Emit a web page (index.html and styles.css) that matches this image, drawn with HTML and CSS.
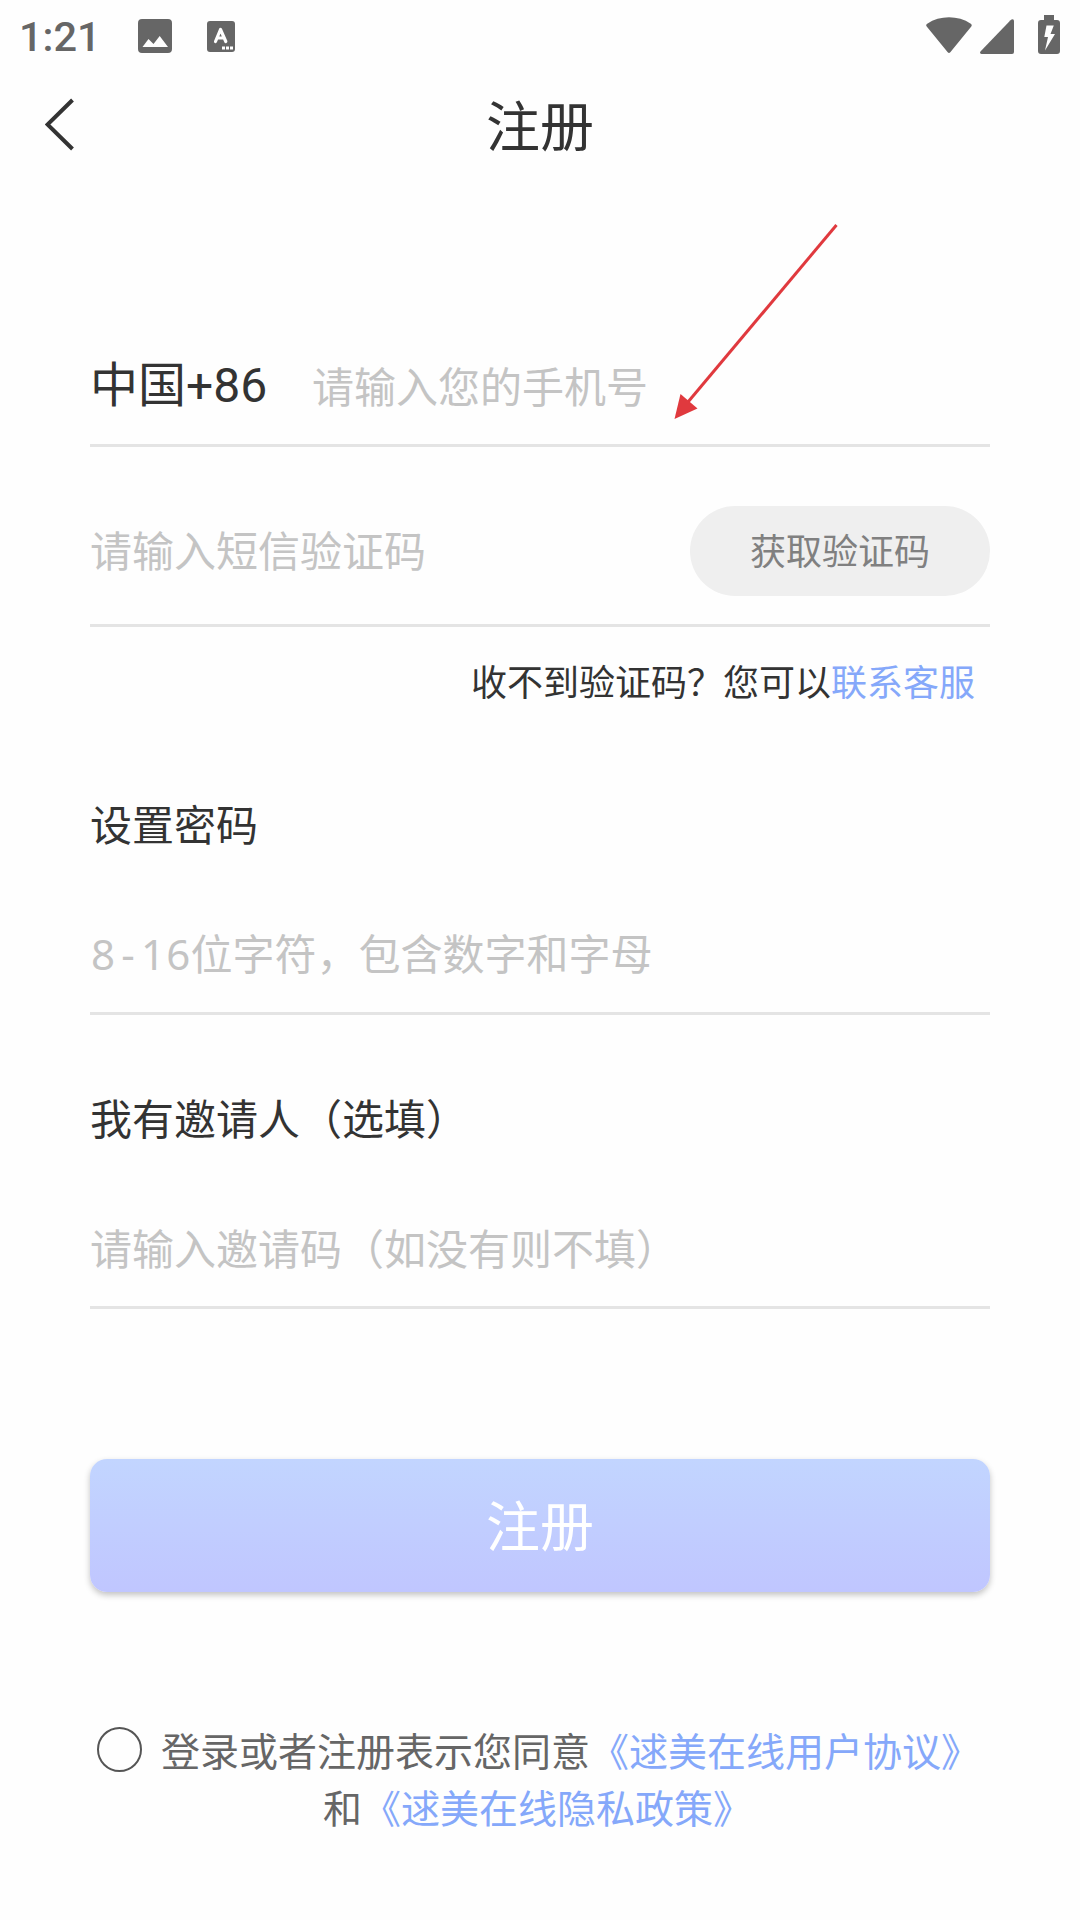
FILE: index.html
```html
<!DOCTYPE html>
<html lang="zh-CN">
<head>
    <meta charset="UTF-8">
    <title>注册</title>
    <meta name="viewport" content="width=device-width, initial-scale=1">
    <link rel="stylesheet" href="styles.css">
</head>
<body>
    <!-- 状态栏 -->
    <div class="status-bar">
        <span class="time">1:21</span>
        <svg class="icon-image" width="34" height="34" viewBox="0 0 34 34">
            <path fill="#666" fill-rule="evenodd" d="M4 0h26a4 4 0 0 1 4 4v26a4 4 0 0 1-4 4H4a4 4 0 0 1-4-4V4a4 4 0 0 1 4-4zM4.500 28H30L21.700 17L15.500 25L10.500 20z"/>
        </svg>
        <svg class="icon-input" width="28" height="31" viewBox="0 0 28 31">
            <rect width="28" height="31" rx="3" fill="#666"/>
            <path d="M8.500 20.500L13.500 8.500L18.800 20.500M10.500 17H16.500" fill="none" stroke="#fff" stroke-width="3.200" stroke-linecap="round" stroke-linejoin="round"/>
            <path d="M15 25.500h3v3h-3zM19 25.500h3v3h-3zM23 25.500h3v3h-3z" fill="#fff"/>
        </svg>
        <div class="status-right">
            <svg class="icon-wifi" width="46" height="37" viewBox="0 0 46 37">
                <path fill="#666" d="M.7 9.500Q-.6 8 1.200 6.700C14-1.800 32-1.800 44.800 6.700Q46.400 8 45.300 9.500L24.300 35.300Q23 36.800 21.700 35.300z"/>
            </svg>
            <svg class="icon-signal" width="34" height="35" viewBox="0 0 34 35">
                <path fill="#666" d="M34 2.500V33q0 2-2 2H1.500q-2.500-.5-.8-2.700L30.500 1.200Q33-.8 34 1.500z"/>
            </svg>
            <svg class="icon-battery" width="22" height="39" viewBox="0 0 22 39">
                <path fill="#666" fill-rule="evenodd" d="M6 0h10v5h3q3 0 3 3v28q0 3-3 3H3q-3 0-3-3V8q0-3 3-3h3zM8.500 10.500L6.300 22H10L7 35.500L17 19H12.500L15.800 10.500z"/>
            </svg>
        </div>
    </div>

    <div class="header">
        <svg class="back" width="30" height="54" viewBox="0 0 30 54">
            <path d="M27.500 2L2.500 26.500L27.500 51" fill="none" stroke="#333" stroke-width="4"/>
        </svg>
        <h1>注册</h1>
    </div>

    <div class="form">
        <div class="field field-phone">
            <span class="area">中国<span class="latin">+86</span></span>
            <span class="hint">请输入您的手机号</span>
        </div>
        <div class="field field-code">
            <span class="hint">请输入短信验证码</span>
            <button class="btn-code">获取验证码</button>
        </div>
        <div class="help">收不到验证码？您可以<a href="#">联系客服</a></div>

        <label>设置密码</label>
        <div class="field">
            <span class="hint"><span class="mono">8<i>-</i>16</span>位字符，包含数字和字母</span>
        </div>

        <label>我有邀请人（选填）</label>
        <div class="field">
            <span class="hint">请输入邀请码（如没有则不填）</span>
        </div>

        <button class="btn-submit">注册</button>

        <div class="agree">
            <span class="check"></span>登录或者注册表示您同意<a href="#">《逑美在线用户协议》</a><br>和<a href="#">《逑美在线隐私政策》</a>
        </div>
    </div>

    <!-- 指向手机号输入框的箭头 -->
    <svg class="arrow" width="166" height="200" viewBox="0 0 166 200">
        <path d="M162.500 1L14 178" stroke="#e0393e" stroke-width="3" fill="none"/>
        <path d="M.5 195L6.500 170L23.500 184.500z" fill="#e0393e"/>
    </svg>
</body>
</html>
```
FILE: styles.css
```css
* {
    box-sizing: border-box;
}
body {
    position: relative;
    margin: 0;
    min-height: 1920px;
    background: #fefefe;
    font-family: "Noto Sans CJK SC", sans-serif;
    color: #333;
    overflow-x: hidden;
}
a {
    color: #85a8fa;
    text-decoration: none;
}
button {
    border: none;
    padding: 0;
    font-family: inherit;
}
.status-bar {
    height: 72px;
    padding: 0 20px 0 19px;
    display: flex;
    align-items: center;
}
.time {
    width: 119px;
    font-family: Roboto, sans-serif;
    font-size: 41.5px;
    font-weight: 500;
    color: #666;
}
.icon-input {
    margin-left: 35px;
}
.status-right {
    margin-left: auto;
    margin-bottom: 4px;
    display: flex;
    align-items: flex-end;
    height: 39px;
}
.icon-signal {
    margin: 0 24px 0 8px;
}
.header {
    height: 106px;
    padding: 0 45px;
    display: grid;
    grid-template-columns: 30px 1fr 30px;
    align-items: center;
}
.header h1 {
    margin: 0;
    padding-bottom: 3px;
    font-size: 54px;
    line-height: 98px;
    font-weight: 400;
    text-align: center;
}
.form {
    margin: 146px 90px 0;
}
.field {
    height: 123px;
    display: flex;
    align-items: center;
    border-bottom: 3px solid #e4e4e4;
    font-size: 42px;
    line-height: 60px;
}
.field .hint {
    padding-top: 1px;
    color: #c4c4c4;
}
.area {
    width: 222px;
    padding-bottom: 1px;
    font-size: 48px;
}
.latin {
    font-family: Roboto, sans-serif;
}
.mono {
    margin: 0 -1px 0 1px;
    font-family: "Noto Sans", sans-serif;
    letter-spacing: 1.2px;
}
.mono i {
    font-style: normal;
    padding: 0 5px;
}
.field-code {
    height: 180px;
    padding-top: 30px;
    justify-content: space-between;
}
.field-code .hint {
    padding: 0 0 3px;
}
.btn-code {
    width: 300px;
    height: 90px;
    padding-bottom: 3px;
    border-radius: 45px;
    background: #efefef;
    color: #808080;
    font-size: 36px;
}
.help {
    height: 110px;
    padding-right: 15px;
    font-size: 36px;
    line-height: 107px;
    text-align: right;
}
.form label {
    display: block;
    padding-top: 53px;
    height: 155px;
    font-size: 42px;
    line-height: 66px;
}
.field + label {
    height: 171px;
    padding-top: 69px;
}
.btn-submit {
    display: block;
    width: 100%;
    height: 133px;
    margin-top: 150px;
    padding-bottom: 4px;
    border-radius: 17px;
    background: linear-gradient(#c2d5ff, #c0c6ff);
    box-shadow: 0 3px 6px rgba(0,0,0,0.24);
    color: #fff;
    font-size: 54px;
}
.agree {
    width: 885px;
    margin: 129px 0 0 5px;
    font-size: 39px;
    line-height: 57px;
    text-align: center;
    white-space: nowrap;
    color: #666;
}
.check {
    display: inline-block;
    width: 45px;
    height: 45px;
    margin: 0 19px 0 2px;
    border: 2px solid #555;
    border-radius: 50%;
    vertical-align: -6px;
}
.arrow {
    position: absolute;
    left: 674px;
    top: 224px;
}
```
